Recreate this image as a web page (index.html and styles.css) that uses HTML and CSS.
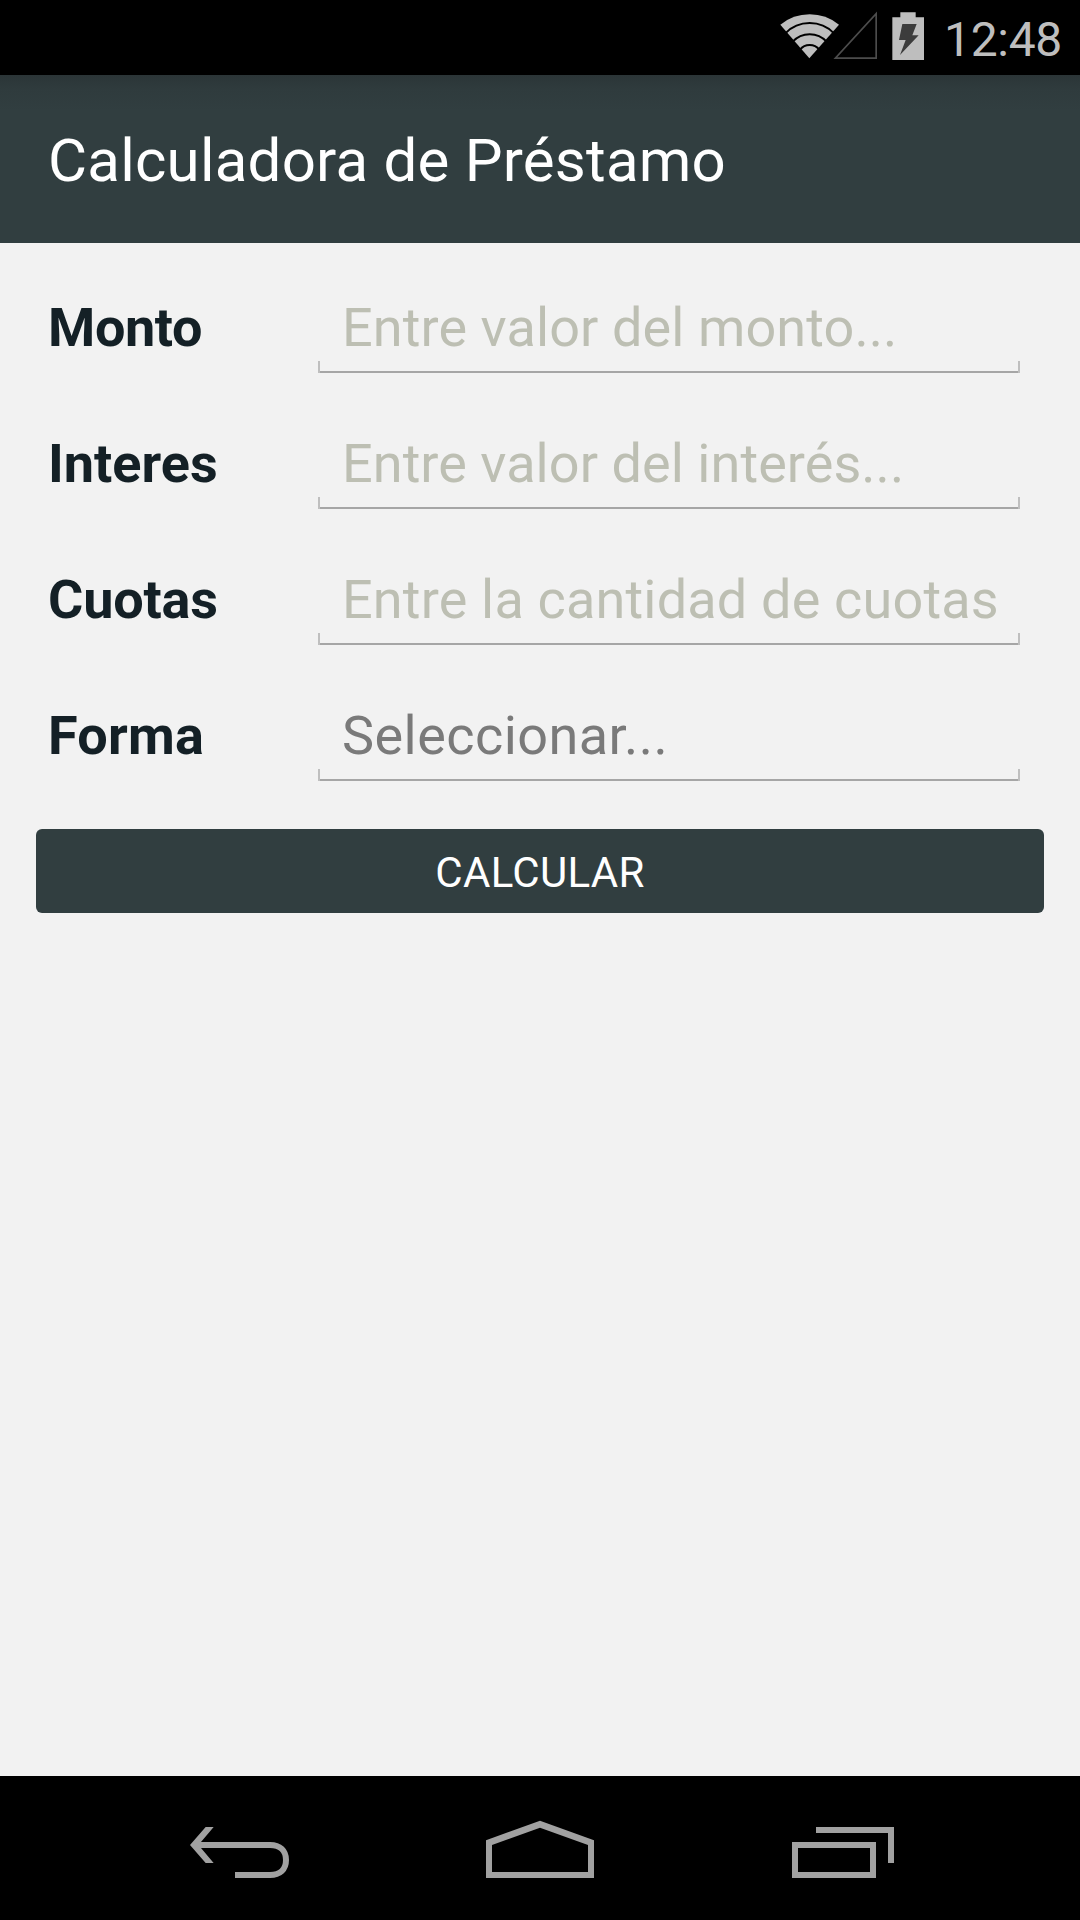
FILE: index.html
```html
<!DOCTYPE html>
<html lang="es">
<head>
<meta charset="utf-8">
<title>Calculadora de Préstamo</title>
<link rel="stylesheet" href="styles.css">
</head>
<body>
<div class="status-bar">
  <svg class="wifi" viewBox="60 33 180 150">
    <path fill="#bebebe" d="M148 175 L61 74 Q100 43 149 43 Q198 43 237 74 Z"/>
    <g fill="none" stroke="#000" stroke-width="6">
      <path d="M76 100 A102 102 0 0 1 222 100"/>
      <path d="M98 125 A69 69 0 0 1 200 125"/>
      <path d="M120 149 A37 37 0 0 1 178 149"/>
    </g>
  </svg>
  <svg class="signal" viewBox="219 33 132 150"><path fill="none" stroke="#4c4c4c" stroke-width="5" d="M226 174.500H348.500V41Z"/></svg>
  <svg class="battery" viewBox="396 33 96 150">
    <path fill="#bebebe" d="M397 52H421V37H467V52H492V180H397Z"/>
    <path fill="#3c3c3c" d="M427 72H470L457 106H476L420 165L437 120H417Z"/>
  </svg>
  <span class="clock">12:48</span>
</div>
<header class="app-bar"><h1 class="title">Calculadora de Préstamo</h1></header>
<main class="content">
  <form class="form">
    <div class="row row-monto"><label class="label" for="monto">Monto</label><div class="field"><input class="input" id="monto" placeholder="Entre valor del monto..."></div></div>
    <div class="row row-interes"><label class="label" for="interes">Interes</label><div class="field"><input class="input" id="interes" placeholder="Entre valor del interés..."></div></div>
    <div class="row row-cuotas"><label class="label" for="cuotas">Cuotas</label><div class="field"><input class="input" id="cuotas" placeholder="Entre la cantidad de cuotas..."></div></div>
    <div class="row row-forma"><label class="label" for="forma">Forma</label><div class="field"><input class="input picker" id="forma" placeholder="Seleccionar..." readonly></div></div>
    <button class="submit" type="button">CALCULAR</button>
  </form>
</main>
<nav class="nav-bar">
  <svg class="back" viewBox="90 180 300 180">
    <path fill="#a1a1a1" d="M90 255L137 201H161L123 246V264L161 309H137Z"/>
    <path fill="none" stroke="#a1a1a1" stroke-width="18" d="M112 255H330C360 255 378 272 378 300S360 345 330 345H225"/>
  </svg>
  <svg class="home" viewBox="978 180 324 180"><path fill="#a1a1a1" fill-rule="evenodd" d="M978 241L1140 182L1302 241V354H978ZM996 255V336H1284V255L1140 203Z"/></svg>
  <svg class="recents" viewBox="96 180 306 180"><path fill="#a1a1a1" fill-rule="evenodd" d="M96 246H348V354H96ZM114 264V336H330V264ZM168 201H402V309H384V219H168Z"/></svg>
</nav>
</body>
</html>
```
FILE: styles.css
```css
* { box-sizing: border-box; }

body {
  margin: 0;
  width: 1080px;
  height: 1920px;
  display: flex;
  flex-direction: column;
  overflow: hidden;
  background: #f2f2f2;
  font-family: Roboto, "Liberation Sans", sans-serif;
}

.status-bar {
  height: 75px;
  flex: none;
  display: flex;
  align-items: flex-start;
  padding: 11px 0 0 780px;
  background: #000;
}
.wifi { width: 60px; height: 50px; flex: none; }
.signal { width: 44px; height: 50px; flex: none; margin-left: -7px; }
.battery { width: 32px; height: 50px; flex: none; margin-left: 15px; }
.clock {
  margin-left: 20px;
  color: #bebebe;
  font-size: 48px;
  line-height: 58px;
  letter-spacing: -0.3px;
}

.app-bar {
  height: 168px;
  flex: none;
  display: flex;
  align-items: center;
  padding: 4px 48px 0;
  background: linear-gradient(#2b3537 0, #2f3b3d 14px, #313e40 36px);
}
.title {
  margin: 0;
  color: #fff;
  font-size: 60px;
  font-weight: 400;
  line-height: 70px;
  letter-spacing: 0.23px;
}

.content { flex: 1; padding: 28px 36px 0; }
.form { display: flex; flex-direction: column; }
.row {
  height: 136px;
  display: flex;
  align-items: flex-start;
  padding-left: 12px;
}
.label {
  width: 270px;
  padding-top: 25px;
  color: #142026;
  font-size: 54px;
  font-weight: 700;
  line-height: 64px;
}
.row-monto .label { letter-spacing: -0.4px; }
.row-cuotas .label { letter-spacing: -0.2px; }
.row-forma .label { letter-spacing: 0.2px; }
.field {
  position: relative;
  width: 702px;
  height: 102px;
  padding: 25px 24px 0;
  border-bottom: 2px solid #a6a6a6;
}
.field::before,
.field::after {
  content: "";
  position: absolute;
  bottom: -2px;
  width: 2px;
  height: 12px;
  background: #bfbfbf;
}
.field::before { left: 0; }
.field::after { right: 0; }
.input {
  display: block;
  width: 100%;
  height: 64px;
  padding: 0;
  border: 0;
  outline: 0;
  background: none;
  font: 400 54px/64px Roboto, "Liberation Sans", sans-serif;
}
.input::placeholder { color: #bdbfb3; opacity: 1; }
.picker::placeholder { color: #7a7a7a; }
.row-monto .input { letter-spacing: 0.1px; }
.row-interes .input { letter-spacing: 0.06px; }
.row-cuotas .input { letter-spacing: 0.18px; }
.row-forma .input { letter-spacing: 0.45px; }

.submit {
  height: 84px;
  margin-top: 14px;
  padding: 4px 0 0;
  border: 0;
  border-radius: 6px;
  background: #313e40;
  color: #fff;
  font: 400 42px/50px Roboto, "Liberation Sans", sans-serif;
  letter-spacing: 0.3px;
}

.nav-bar {
  height: 144px;
  flex: none;
  display: flex;
  padding: 44px 0 0 190px;
  background: #000;
}
.back { width: 100px; height: 60px; }
.home { width: 108px; height: 60px; margin-left: 196px; }
.recents { width: 102px; height: 60px; margin-left: 198px; }
```
